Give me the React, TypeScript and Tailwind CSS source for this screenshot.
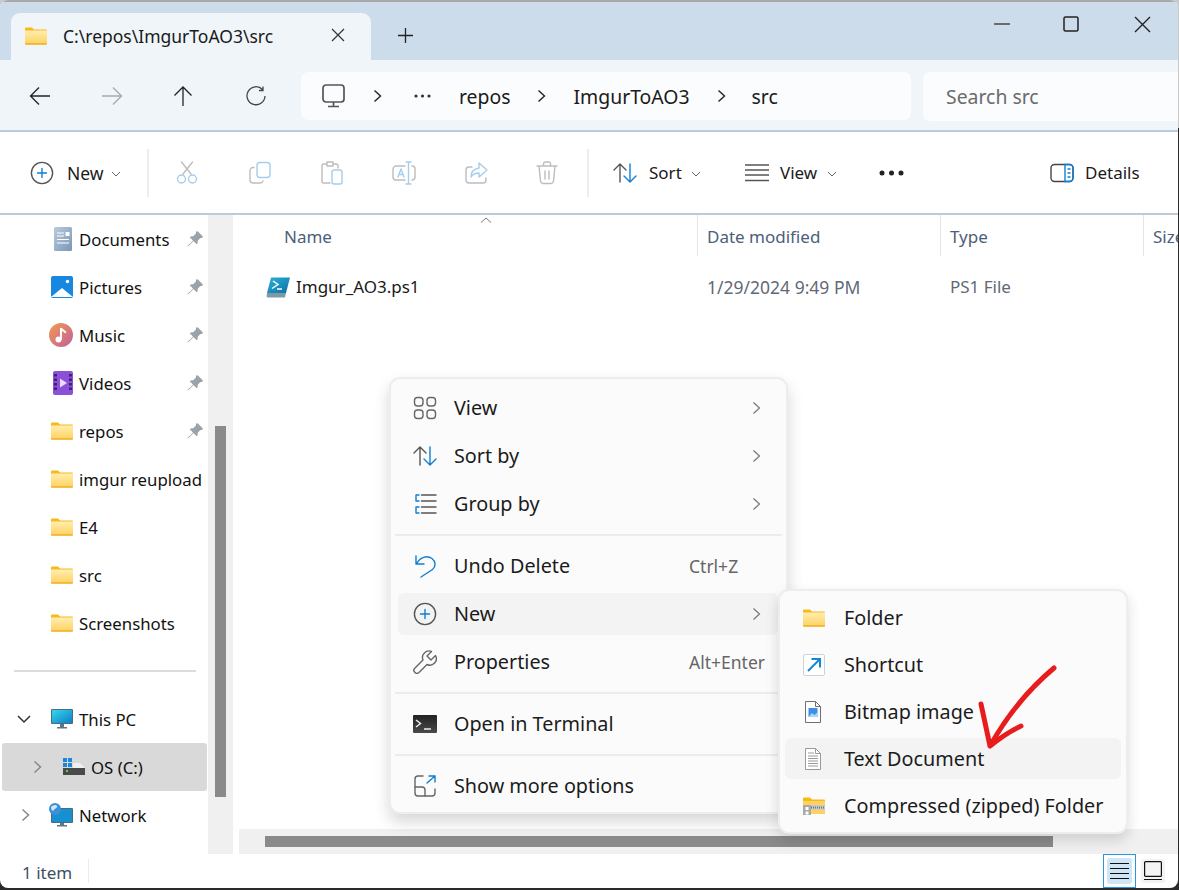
import React from "react";

const Folder = ({ id, w = 22, h = 18 }: { id: string; w?: number; h?: number }) => (
  <svg width={w} height={h} viewBox="0 0 22 18" className="shrink-0">
    <defs>
      <linearGradient id={id} x1="0" y1="0" x2="0" y2="1">
        <stop offset="0" stopColor="#ffeeb0" />
        <stop offset="1" stopColor="#fdd25f" />
      </linearGradient>
    </defs>
    <path d="M0 1.500A1 1 0 0 1 1 .5h6l2 2h12a1 1 0 0 1 1 1V5H0z" fill="#fbb81a" />
    <path d="M0 3.500h22V16a1.200 1.200 0 0 1-1.200 1.200H1.200A1.200 1.200 0 0 1 0 16z" fill={`url(#${id})`} />
    <path d="M0 16.300h22v.5a1 1 0 0 1-1 1H1a1 1 0 0 1-1-1z" fill="#eeae22" />
  </svg>
);

const Chev = ({ className = "", color = "#333", w = 9, h = 14, sw = 1.4 }: { className?: string; color?: string; w?: number; h?: number; sw?: number }) => (
  <svg width={w} height={h} viewBox="0 0 9 14" className={`shrink-0 ${className}`} fill="none" stroke={color} strokeWidth={sw}>
    <path d="M1.500 1.500 7.500 7l-6 5.500" />
  </svg>
);

const Down = () => (
  <svg width="10" height="6" viewBox="0 0 10 6" fill="none" stroke="#666" strokeWidth="1">
    <path d="M1 1l4 4 4-4" />
  </svg>
);

const Pin = () => (
  <svg width="16" height="16" viewBox="0 0 16 16" fill="#9aa3aa" className="shrink-0">
    <path d="M9.400.6c.4-.5 1.100-.5 1.500-.1l4.600 4.600c.4.400.4 1.100-.1 1.500-.6.5-1.300.7-2 .5L10.700 9.800c.3 1.300-.1 2.600-1 3.500L6.400 10 1 15.500.4 15 6 9.600 2.700 6.300c.9-.9 2.200-1.300 3.500-1l2.700-2.700c-.2-.7 0-1.500.5-2z" />
  </svg>
);

const Line = ({ children, w = 24, h = 24 }: { children: React.ReactNode; w?: number; h?: number }) => (
  <svg width={w} height={h} viewBox="0 0 24 24" fill="none" strokeWidth="1.4" strokeLinecap="round" strokeLinejoin="round" className="shrink-0">
    {children}
  </svg>
);

const PlusCircle = () => (
  <Line>
    <circle cx="12" cy="12" r="10.600" stroke="#555" />
    <path d="M12 7.500v9M7.500 12h9" stroke="#0f7fd4" />
  </Line>
);
const SortIcon = () => (
  <Line>
    <path d="M7 21V3M1 9l6-6 6 6" stroke="#555" />
    <path d="M17 3v18M11 15l6 6 6-6" stroke="#0f7fd4" />
  </Line>
);

const Spacer = ({ w }: { w: number }) => <div style={{ width: w }} className="shrink-0" />;

const NavRow = ({ icon, label, pin }: { icon: React.ReactNode; label: string; pin?: boolean }) => (
  <div className="flex h-[48px] items-center text-[#111]">
    <div className="flex w-[79px] shrink-0 items-center justify-end pr-[6px]">{icon}</div>
    <span className="w-[108px] whitespace-nowrap pt-[2px]">{label}</span>
    {pin && <Pin />}
  </div>
);

const MenuRow = ({ icon, label, right, chev, active }: { icon: React.ReactNode; label: string; right?: string; chev?: boolean; active?: boolean }) => (
  <div className={`ml-[7px] mr-[8px] flex h-[42px] items-center rounded-[6px] ${active ? "bg-[#f3f3f3]" : ""}`}>
    <div className="flex w-[56px] shrink-0 items-center pl-[15px]">{icon}</div>
    <span className="flex-1 whitespace-nowrap text-[#1b1b1b]">{label}</span>
    {right && <span className="absolute left-[298px] text-[17.500px] text-[#666]">{right}</span>}
    {chev && <Chev className="mr-[17px]" color="#777" sw={1.200} />}
  </div>
);

const Gap6 = () => <div className="h-[6px]" />;
const Sep = () => <div className="mx-[4px] my-[9px] h-[2px] bg-[#ececec]" />;

const SubRow = ({ icon, label, active }: { icon: React.ReactNode; label: string; active?: boolean }) => (
  <div className={`mx-[5px] mb-[6px] flex h-[41px] items-center rounded-[6px] last:mb-0 ${active ? "bg-[#f3f3f3]" : ""}`}>
    <div className="flex w-[59px] shrink-0 items-center justify-start pl-[18px]">{icon}</div>
    <span className="whitespace-nowrap text-[#1b1b1b]">{label}</span>
  </div>
);

const HeaderCell = ({ w, label }: { w: number; label: string }) => (
  <div style={{ width: w }} className="flex h-[41px] shrink-0 items-center border-l border-[#e5e5e5] pl-[9px] pt-[2px] text-[#4c607a]">
    {label}
  </div>
);

export default function App() {
  return (
    <div className="relative h-[890px] w-[1179px] overflow-hidden bg-[linear-gradient(to_bottom,#c9c9c9_128px,#2a2a2a_128px)] font-['Noto_Sans',sans-serif] text-[17px]">
      <div className="flex h-[888px] w-[1178px] flex-col overflow-hidden rounded-[8px] bg-white">
        {/* Title bar */}
        <div className="flex h-[60px] shrink-0 items-end border-t-2 border-[#a9a9a9] bg-[#ccdcea] pl-[11px]">
          <div className="flex h-[47px] w-[360px] items-center rounded-t-[9px] bg-[#f0f5f9] pb-[1px] pl-[14px] text-[17.500px]">
            <Folder id="tabF" />
            <span className="ml-[16px] w-[268px] whitespace-nowrap text-[#1a1a1a]">C:\repos\ImgurToAO3\src</span>
            <svg width="14" height="14" viewBox="0 0 14 14" stroke="#333" strokeWidth="1.200" className="-mt-[2px]">
              <path d="M1 1l12 12M13 1 1 13" />
            </svg>
          </div>
          <div className="flex h-[47px] items-center pb-[2px] pl-[27px]">
            <svg width="15" height="15" viewBox="0 0 15 15" stroke="#222" strokeWidth="1.300">
              <path d="M7.500 0v15M0 7.500h15" />
            </svg>
          </div>
          <div className="flex-1" />
          <div className="flex h-[58px] items-center self-start pb-[14px]">
            <svg width="16" height="2" viewBox="0 0 16 2">
              <path d="M0 1h16" stroke="#222" strokeWidth="1.200" />
            </svg>
            <Spacer w={53} />
            <svg width="16" height="16" viewBox="0 0 16 16" fill="none" stroke="#222" strokeWidth="1.500">
              <rect x="1" y="1" width="14" height="14" rx="1.500" />
            </svg>
            <Spacer w={55} />
            <svg width="17" height="17" viewBox="0 0 17 17" stroke="#222" strokeWidth="1.400">
              <path d="M1 1l15 15M16 1 1 16" />
            </svg>
            <Spacer w={27} />
          </div>
        </div>

        {/* Address row */}
        <div className="flex h-[72px] shrink-0 items-center border-b-2 border-[#bccbd8] bg-[#f0f5f9] pt-[2px] text-[19.400px]">
          <div className="flex w-[301px] shrink-0 items-center pl-[29px]">
            <svg width="22" height="20" viewBox="0 0 22 20" fill="none" stroke="#222" strokeWidth="1.300"><path d="M21 10H2M10 1.500 1.500 10l8.500 8.500" /></svg>
            <Spacer w={50} />
            <svg width="22" height="20" viewBox="0 0 22 20" fill="none" stroke="#a5a9ad" strokeWidth="1.300"><path d="M1 10h19M12 1.500l8.500 8.500-8.500 8.500" /></svg>
            <Spacer w={50} />
            <svg width="20" height="22" viewBox="0 0 20 22" fill="none" stroke="#222" strokeWidth="1.300"><path d="M10 21V2M1.500 10.500 10 2l8.500 8.500" /></svg>
            <Spacer w={53} />
            <svg width="20" height="20" viewBox="0 0 20 20" fill="none" stroke="#444" strokeWidth="1.300"><path d="M16.500 3.500A9 9 0 1 0 19 10M17 .5v4h-4" /></svg>
          </div>
          <div className="flex h-[48px] w-[610px] shrink-0 items-center rounded-[7px] bg-[#fafcfd] pl-[21px] text-[#1a1a1a]">
            <svg width="23" height="24" viewBox="0 0 23 24" fill="none" stroke="#555" strokeWidth="1.700" className="shrink-0">
              <rect x="1" y="1" width="21" height="17" rx="3" />
              <path d="M11.500 18v4M6 22.500h11" />
            </svg>
            <Spacer w={28} />
            <Chev color="#222" />
            <Spacer w={32} />
            <svg width="17" height="4" viewBox="0 0 17 4" fill="#333" className="shrink-0"><circle cx="2" cy="2" r="1.600" /><circle cx="8.500" cy="2" r="1.600" /><circle cx="15" cy="2" r="1.600" /></svg>
            <Spacer w={28} />
            <span className="pt-[2px]">repos</span>
            <Spacer w={26} />
            <Chev color="#222" />
            <Spacer w={28} />
            <span className="pt-[2px]">ImgurToAO3</span>
            <Spacer w={27} />
            <Chev color="#222" />
            <Spacer w={26} />
            <span className="pt-[2px]">src</span>
          </div>
          <div className="ml-[12px] flex h-[49px] flex-1 items-center rounded-l-[7px] bg-[#fafcfd] pl-[23px] pt-[2px] text-[#6b6b6b]">Search src</div>
        </div>

        {/* Command bar */}
        <div className="flex h-[83px] shrink-0 items-center border-b-2 border-[#bccbd8] bg-white pt-[1px] text-[#1a1a1a]">
          <Spacer w={30} />
          <PlusCircle />
          <span className="ml-[13px] w-[36px] text-[17.500px]">New</span>
          <div className="ml-[8px] mt-[1px]"><Down /></div>
          <div className="ml-[26px] h-[48px] w-[2px] bg-[#ececec]" />
          <Spacer w={26} />
          <Line>
            <path d="M8 13 17.500 1M16 13 6.500 1" stroke="#bdbdbd" />
            <circle cx="6.500" cy="18" r="4" stroke="#a6cdee" />
            <circle cx="17.500" cy="18" r="4" stroke="#a6cdee" />
          </Line>
          <Spacer w={49} />
          <Line>
            <rect x="9" y="1.500" width="13" height="15" rx="3" stroke="#a6cdee" />
            <path d="M6 6.500H5a3 3 0 0 0-3 3V19a3 3 0 0 0 3 3h7a3 3 0 0 0 3-2" stroke="#bdbdbd" />
          </Line>
          <Spacer w={48} />
          <Line>
            <path d="M18 7V5a2 2 0 0 0-2-2h-2.500M6.500 3H4a2 2 0 0 0-2 2v15a2 2 0 0 0 2 2h6M7 1h6v4H7z" stroke="#bdbdbd" />
            <rect x="12" y="9" width="10" height="14" rx="2" stroke="#a6cdee" />
          </Line>
          <Spacer w={48} />
          <Line>
            <path d="M13 5H4a3 3 0 0 0-3 3v8a3 3 0 0 0 3 3h9M20 5a3 3 0 0 1 3 3v8a3 3 0 0 1-3 3" stroke="#bdbdbd" />
            <path d="M16.500 1v22M14 1h5M14 23h5M6 16l3-8 3 8M7 13.500h4" stroke="#a6cdee" />
          </Line>
          <Spacer w={48} />
          <Line>
            <path d="M22 17v2a3 3 0 0 1-3 3H5a3 3 0 0 1-3-3V9a3 3 0 0 1 3-3h3" stroke="#bdbdbd" />
            <path d="M15 2l8 7-8 7v-4c-4 0-6 1-8 4 0-5 3-8 8-9z" stroke="#a6cdee" />
          </Line>
          <Spacer w={47} />
          <Line>
            <path d="M2 5h20M8.500 5V3a2 2 0 0 1 2-2h3a2 2 0 0 1 2 2v2M4 5l1.500 15a3 3 0 0 0 3 2.500h7a3 3 0 0 0 3-2.500L20 5M10 10v8M14 10v8" stroke="#bdbdbd" />
          </Line>
          <Spacer w={28} />
          <div className="h-[48px] w-[2px] bg-[#ececec]" />
          <Spacer w={24} />
          <SortIcon />
          <span className="ml-[12px] w-[34px]">Sort</span>
          <div className="ml-[8px] mt-[1px]"><Down /></div>
          <Spacer w={44} />
          <svg width="24" height="18" viewBox="0 0 24 18" stroke="#555" strokeWidth="1.300" className="shrink-0">
            <path d="M0 1h24M0 6h24M0 11h24M0 16.500h24" />
          </svg>
          <span className="ml-[11px] w-[38px]">View</span>
          <div className="ml-[9px] mt-[1px]"><Down /></div>
          <Spacer w={42} />
          <svg width="25" height="6" viewBox="0 0 25 6" fill="#222" className="shrink-0"><circle cx="3" cy="3" r="2.500" /><circle cx="12.500" cy="3" r="2.500" /><circle cx="22" cy="3" r="2.500" /></svg>
          <Spacer w={146} />
          <svg width="24" height="20" viewBox="0 0 24 20" fill="none" strokeWidth="1.400" className="shrink-0">
            <rect x="1" y="1.500" width="22" height="17" rx="3.500" stroke="#444" />
            <path d="M15 1.500h4.500a3.500 3.500 0 0 1 3.500 3.500v10a3.500 3.500 0 0 1-3.500 3.500H15z" stroke="#0f7fd4" />
            <path d="M17.500 6h3M17.500 10h3M17.500 14h3" stroke="#0f7fd4" />
          </svg>
          <span className="ml-[11px]">Details</span>
        </div>

        {/* Body */}
        <div className="flex min-h-0 flex-1">
          {/* Sidebar */}
          <div className="w-[208px] shrink-0 text-[16.800px]">
            <NavRow label="Documents" pin icon={
              <svg width="20" height="24" viewBox="0 0 20 24"><defs><linearGradient id="doc" x1="0" y1="0" x2="1" y2="1"><stop offset="0" stopColor="#b9cbe0" /><stop offset="1" stopColor="#7a96b4" /></linearGradient></defs><rect x="1" y="0" width="18" height="24" rx="1.500" fill="url(#doc)" /><path d="M4 6h7M4 9h7M4 12.500h12M4 16h12" stroke="#fff" strokeWidth="1" /><rect x="12.500" y="5" width="4" height="4" fill="#fff" /></svg>
            } />
            <NavRow label="Pictures" pin icon={
              <svg width="22" height="22" viewBox="0 0 22 22"><rect width="22" height="22" rx="2" fill="#1787e0" /><circle cx="16.500" cy="5.500" r="1.700" fill="#fff" /><path d="M0 21l11-9 11 9z" fill="#fff" /></svg>
            } />
            <NavRow label="Music" pin icon={
              <svg width="24" height="24" viewBox="0 0 24 24"><defs><linearGradient id="mus" x1="0" y1="0" x2="1" y2="1"><stop offset="0" stopColor="#f59a4e" /><stop offset="1" stopColor="#bf5f9f" /></linearGradient></defs><circle cx="12" cy="12" r="12" fill="url(#mus)" /><path d="M12 5v11.500" stroke="#fff" strokeWidth="2" /><circle cx="9.500" cy="16.500" r="3" fill="#fff" /><path d="M12 5c1 3 4 2.500 4.500 5" stroke="#fff" strokeWidth="2" fill="none" /></svg>
            } />
            <NavRow label="Videos" pin icon={
              <svg width="20" height="24" viewBox="0 0 20 24"><rect width="20" height="24" rx="2" fill="#8b4fd8" /><path d="M7 7.500l7 4.500-7 4.500z" fill="#e8dcff" /><path d="M2.500 3v18M17.500 3v18" stroke="#3f2175" strokeWidth="3" strokeDasharray="2.500 2" /></svg>
            } />
            <NavRow label="repos" pin icon={<Folder id="f1" />} />
            <NavRow label="imgur reupload" icon={<Folder id="f2" />} />
            <NavRow label="E4" icon={<Folder id="f3" />} />
            <NavRow label="src" icon={<Folder id="f4" />} />
            <NavRow label="Screenshots" icon={<Folder id="f5" />} />
            <div className="ml-[14px] mt-[23px] h-[2px] w-[182px] bg-[#dcdcdc]" />
            <div className="mt-[23px] flex h-[48px] items-center text-[#111]">
              <svg width="14" height="9" viewBox="0 0 14 9" fill="none" stroke="#333" strokeWidth="1.500" className="ml-[17px]"><path d="M1 1l6 6 6-6" /></svg>
              <svg width="22" height="20" viewBox="0 0 22 20" className="ml-[20px]"><defs><linearGradient id="mon" x1="0" y1="0" x2="1" y2="1"><stop offset="0" stopColor="#35d6ec" /><stop offset="1" stopColor="#0f7fc7" /></linearGradient></defs><rect width="22" height="15" rx="1" fill="#4d6b7c" /><rect x="1" y="1" width="20" height="13" fill="url(#mon)" /><path d="M9 15h4v3H9zM6 18h10v1.500H6z" fill="#5d7787" /></svg>
              <span className="ml-[6px] pt-[2px]">This PC</span>
            </div>
            <div className="ml-[2px] flex h-[48px] w-[205px] items-center rounded-[3px] bg-[#d9d9d9] text-[#111]">
              <Chev className="ml-[31px]" color="#888" sw={1.500} />
              <svg width="22" height="18" viewBox="0 0 22 18" className="ml-[21px]">
                <rect x="0" y="0" width="4" height="4" fill="#1c86dd" /><rect x="5" y="0" width="4" height="4" fill="#1c86dd" /><rect x="0" y="5" width="4" height="4" fill="#1c86dd" /><rect x="5" y="5" width="4" height="4" fill="#1c86dd" />
                <path d="M10 5h7l5 5H10z" fill="#eef0f2" />
                <rect x="0" y="10" width="22" height="7" fill="#4a4a4a" />
                <rect x="3" y="12" width="2" height="2" fill="#40e040" />
              </svg>
              <span className="ml-[6px] pt-[2px]">OS (C:)</span>
            </div>
            <div className="flex h-[48px] items-center text-[#111]">
              <Chev className="ml-[21px]" color="#888" sw={1.500} />
              <svg width="24" height="24" viewBox="0 0 24 24" className="ml-[19px]">
                <rect x="2" y="5" width="22" height="15" rx="1" fill="#4d6b7c" /><rect x="3" y="6" width="20" height="13" fill="#1790d0" /><path d="M11 20h4v2h-4zM8 22h10v1.500H8z" fill="#5d7787" /><circle cx="6" cy="6" r="6" fill="#3d8fd6" /><path d="M2 4c2-2 5-3 6-1s-2 2-3 4-3 0-3-3z" fill="#cfe6f7" />
              </svg>
              <span className="ml-[6px] pt-[2px]">Network</span>
            </div>
          </div>
          {/* Vertical scrollbar */}
          <div className="flex w-[25px] shrink-0 flex-col bg-[#f0f0f0] pl-[7px] pt-[211px]">
            <div className="h-[371px] w-[11px] bg-[#8a8a8a]" />
          </div>
          <div className="w-[6px] shrink-0" />
          {/* File list */}
          <div className="flex min-w-0 flex-1 flex-col">
            <div className="flex shrink-0 text-[17px]">
              <div className="relative flex h-[41px] w-[458px] shrink-0 items-center pl-[45px] pt-[2px] text-[#4c607a]">
                Name
                <svg width="12" height="6" viewBox="0 0 12 6" fill="none" stroke="#777" className="absolute left-[241px] top-[2px]"><path d="M1 5.500 6 1l5 4.500" /></svg>
              </div>
              <HeaderCell w={243} label="Date modified" />
              <HeaderCell w={203} label="Type" />
              <HeaderCell w={36} label="Size" />
            </div>
            <div className="flex h-[61px] shrink-0 items-center pl-[27px] pt-[1px] text-[17px]">
              <svg width="25" height="21" viewBox="0 0 25 21" className="shrink-0">
                <defs><linearGradient id="ps" x1="0" y1="0" x2="1" y2="1"><stop offset="0" stopColor="#2db2d8" /><stop offset="1" stopColor="#0c6ea8" /></linearGradient></defs>
                <path d="M5 .500h19L20 16H1z" fill="url(#ps)" />
                <path d="M1 16h19l-1 4.500H2a1.500 1.500 0 0 1-1.300-2z" fill="#7d9aa5" />
                <path d="M7 4l5 3.500-6 4M11 12h5" stroke="#fff" strokeWidth="1.500" fill="none" />
              </svg>
              <span className="ml-[5px] w-[411px] shrink-0 text-[#1a1a1a]">Imgur_AO3.ps1</span>
              <span className="w-[243px] shrink-0 text-[17.500px] text-[#5f6a76]">1/29/2024 9:49 PM</span>
              <span className="text-[#5f6a76]">PS1 File</span>
            </div>
            <div className="flex-1" />
            <div className="flex h-[25px] shrink-0 items-center bg-[#f0f0f0] pl-[26px]">
              <div className="h-[11px] w-[788px] bg-[#8a8a8a]" />
            </div>
          </div>
        </div>

        {/* Status bar */}
        <div className="flex h-[34px] shrink-0 items-center pl-[22px] text-[17px] text-[#3d4f66]">
          <span className="w-[66px] pt-[4px]">1 item</span>
          <div className="h-[24px] w-[1px] bg-[#ececec]" />
          <div className="flex-1" />
          <div className="flex h-[34px] w-[33px] items-center justify-center border border-[#2b95dd] bg-white">
            <div className="flex h-[26px] w-[25px] items-center justify-center rounded-[3px] bg-[#cfe6f6]">
              <svg width="19" height="18" viewBox="0 0 19 18" stroke="#111" strokeWidth="1.200"><path d="M0 1.500h19M0 6.500h19M0 11.500h19M0 16.500h19" /></svg>
            </div>
          </div>
          <div className="ml-[5px] mr-[13px] flex h-[24px] w-[24px] items-center justify-center rounded-[3px] bg-[#f3f3f3]">
            <svg width="18" height="20" viewBox="0 0 18 20" fill="none" stroke="#111" strokeWidth="1.200"><rect x=".6" y=".6" width="16.800" height="14.800" rx="1" /><path d="M0 18.500h18" /></svg>
          </div>
        </div>
      </div>

      {/* Context menu */}
      <div className="absolute left-[389px] top-[377px] w-[399px] rounded-[11px] border-2 border-[#ededed] bg-[#fbfbfb] pb-[5px] pt-[8px] text-[19.800px] shadow-[0_8px_16px_rgba(0,0,0,0.16)]">
        <div className="relative">
          <MenuRow label="View" chev icon={
            <Line><rect x="1.500" y="1.500" width="8.500" height="8.500" rx="3" stroke="#666" /><rect x="14" y="1.500" width="8.500" height="8.500" rx="3" stroke="#666" /><rect x="1.500" y="14" width="8.500" height="8.500" rx="3" stroke="#666" /><rect x="14" y="14" width="8.500" height="8.500" rx="3" stroke="#666" /></Line>
          } />
          <Gap6 />
          <MenuRow label="Sort by" chev icon={<SortIcon />} />
          <Gap6 />
          <MenuRow label="Group by" chev icon={
            <Line><path d="M6 3H3v6h3M6 15H3v6h3" stroke="#0f7fd4" /><path d="M8.500 3H23M8.500 9H23M8.500 15H23M8.500 21H23" stroke="#555" /></Line>
          } />
          <Sep />
          <div className="relative">
            <MenuRow label="Undo Delete" right="Ctrl+Z" icon={
              <Line><path d="M3 2v8h8M3.500 10C7 3 14 1 19 4.500c4 3 4 8 .5 11L8 23" stroke="#0f7fd4" /></Line>
            } />
          </div>
          <Gap6 />
          <MenuRow active label="New" chev icon={<PlusCircle />} />
          <Gap6 />
          <div className="relative">
            <MenuRow label="Properties" right="Alt+Enter" icon={
              <Line><path d="M22.500 5.500 18 10l-4-4 4.500-4.500a6.500 6.500 0 0 0-8.500 8.500L2 18a3 3 0 0 0 4 4.500l8-8a6.500 6.500 0 0 0 8.500-9z" stroke="#666" /></Line>
            } />
          </div>
          <Sep />
          <MenuRow label="Open in Terminal" icon={
            <svg width="24" height="18" viewBox="0 0 24 18"><defs><linearGradient id="term" x1="0" y1="0" x2="0" y2="1"><stop offset="0" stopColor="#222" /><stop offset="1" stopColor="#4a4a4a" /></linearGradient></defs><rect width="24" height="18" rx="1" fill="url(#term)" /><path d="M3 5l4.500 3.500L3 12" stroke="#eee" strokeWidth="1.500" fill="none" /><path d="M11 14h7" stroke="#eee" strokeWidth="1.500" /></svg>
          } />
          <Sep />
          <MenuRow label="Show more options" icon={
            <Line><path d="M10 2H5a3 3 0 0 0-3 3v14a3 3 0 0 0 3 3h14a3 3 0 0 0 3-3v-4" stroke="#666" /><path d="M2 13h7a3 3 0 0 1 3 3v6" stroke="#666" /><path d="M14 9l8-7M16 2h6v6" stroke="#0f7fd4" /></Line>
          } />
        </div>
      </div>

      {/* Submenu */}
      <div className="absolute left-[778px] top-[589px] w-[350px] rounded-[11px] border-2 border-[#ededed] bg-[#fbfbfb] py-[6px] text-[19.800px] shadow-[0_6px_14px_rgba(0,0,0,0.14)]">
        <SubRow label="Folder" icon={<Folder id="f6" />} />
        <SubRow label="Shortcut" icon={
          <svg width="22" height="22" viewBox="0 0 22 22"><rect x=".5" y=".5" width="21" height="21" rx="1.500" fill="#fff" stroke="#c9d3e0" /><path d="M5 17 17 5M8.500 5H17v8.500" stroke="#1386dc" strokeWidth="2" fill="none" /></svg>
        } />
        <SubRow label="Bitmap image" icon={
          <svg width="20" height="22" viewBox="0 0 20 22"><path d="M2.500.500h10l5 5v16h-15z" fill="#fff" stroke="#6e6e6e" /><path d="M12.500.500v5h5" fill="none" stroke="#6e6e6e" /><rect x="5.500" y="7" width="9" height="9" fill="#3f8de6" /><path d="M5.500 16l3.500-4 2.500 2 3-3v5z" fill="#a5d8fb" /></svg>
        } />
        <SubRow active label="Text Document" icon={
          <svg width="20" height="22" viewBox="0 0 20 22"><path d="M2.500.500h10l5 5v16h-15z" fill="#fff" stroke="#9a9a9a" /><path d="M12.500.500v5h5" fill="none" stroke="#9a9a9a" /><path d="M5 5h6M5 8h10M5 10.500h10M5 13h10M5 15.500h10M5 18h10" stroke="#9a9a9a" /></svg>
        } />
        <SubRow label="Compressed (zipped) Folder" icon={
          <svg width="22" height="18" viewBox="0 0 22 18"><path d="M0 1.500A1 1 0 0 1 1 .500h6l2 2h12a1 1 0 0 1 1 1V6H0z" fill="#fbb81a" /><path d="M0 4h22v13H0z" fill="#fdd25f" /><path d="M5 8h17v5H5z" fill="#c9c9c9" /><path d="M6 10.500h16" stroke="#777" strokeWidth="2" strokeDasharray="1 1" /><rect x="0" y="8" width="8" height="10" fill="#a8a8a8" /><rect x="2.500" y="10" width="3" height="3" fill="#fff" /><rect x="2.500" y="14.500" width="3" height="3" fill="#fff" /></svg>
        } />
      </div>

      {/* Red annotation arrow */}
      <svg className="pointer-events-none absolute left-[970px] top-[660px]" width="95" height="95" viewBox="970 660 95 95" fill="none" stroke="#e81c1c" strokeWidth="5" strokeLinecap="round" strokeLinejoin="round">
        <path d="M1054 668c-24 20-46 46-64 78l-9-42M990 746c10-8 20-15 31-20" />
      </svg>
    </div>
  );
}
